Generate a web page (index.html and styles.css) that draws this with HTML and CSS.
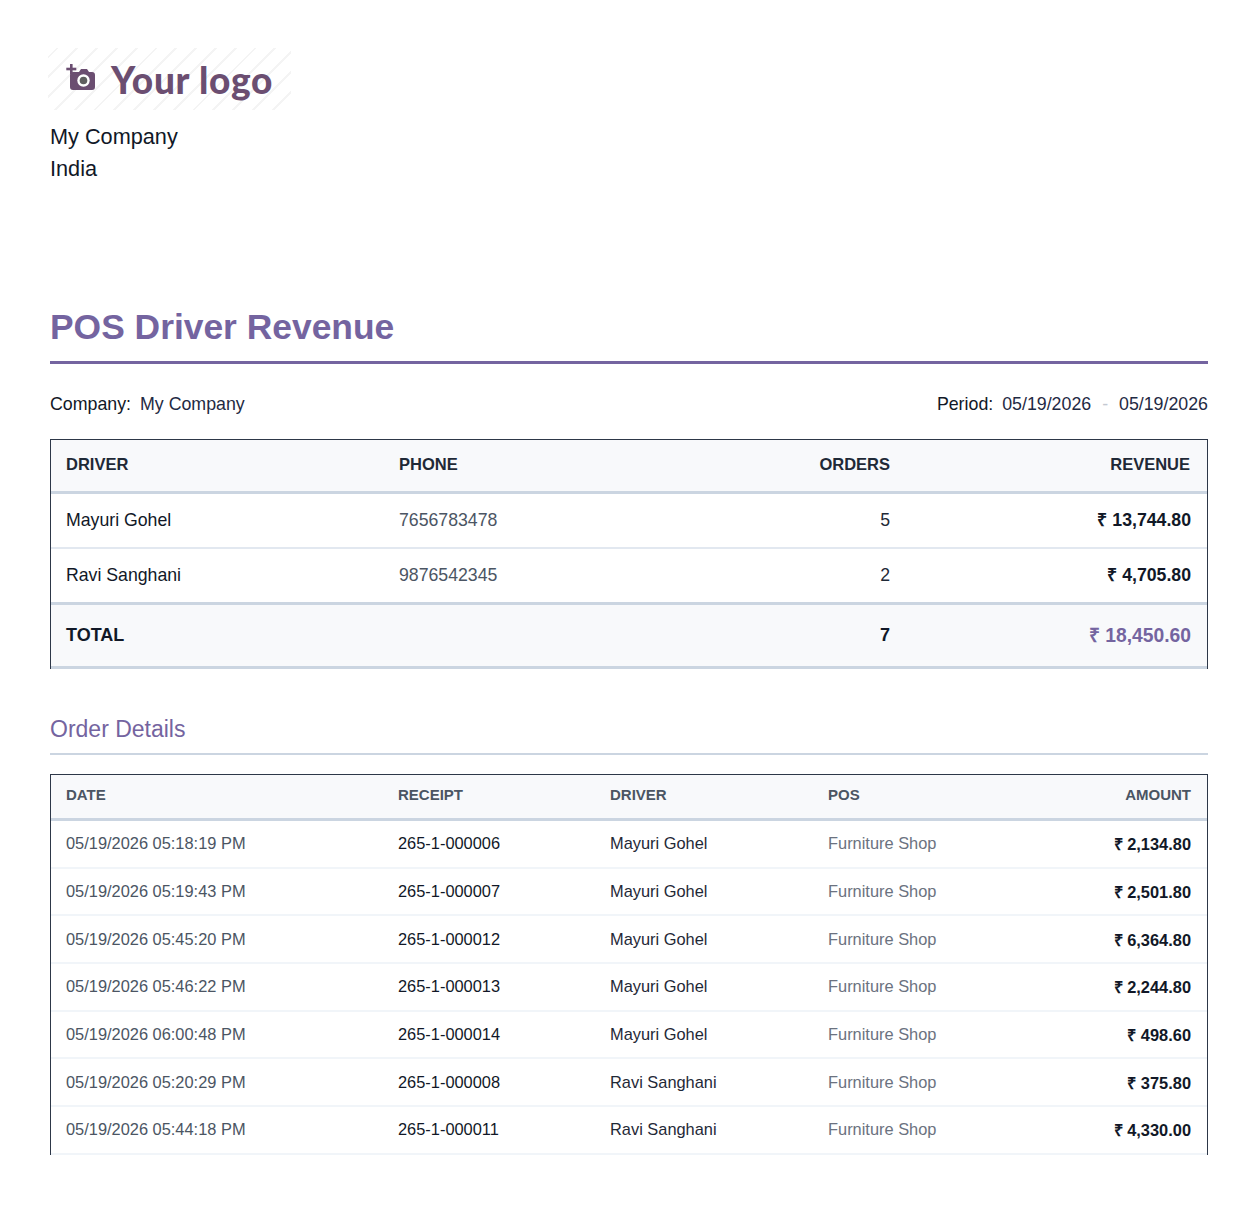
FILE: index.html
```html
<!DOCTYPE html>
<html>
<head>
<meta charset="utf-8">
<link rel="stylesheet" href="styles.css">
</head>
<body>
<div class="page">
  <header class="brand">
    <div class="logo">
      <svg class="cam" width="32" height="28" viewBox="0 0 32 28">
        <rect x="4" y="1" width="2.6" height="10" fill="#6b4e71"/>
        <rect x="0.3" y="4.7" width="10" height="2.6" fill="#6b4e71"/>
        <path d="M7 9 h6 l2 -3 h6 l2 3 h3 a3 3 0 0 1 3 3 v12 a3 3 0 0 1 -3 3 h-19 a3 3 0 0 1 -3 -3 v-12 a3 3 0 0 1 3 -3z" fill="#6b4e71"/>
        <circle cx="17.5" cy="17.5" r="6.2" fill="#fff"/>
        <circle cx="17.5" cy="17.5" r="3.8" fill="#5f5f5f"/>
      </svg>
      <span class="logo-text">Your logo</span>
    </div>
    <div class="addr">
      <div>My Company</div>
      <div>India</div>
    </div>
  </header>

  <h1 class="title">POS Driver Revenue</h1>

  <div class="meta">
    <div><span class="lbl">Company:</span> <span class="val">My Company</span></div>
    <div><span class="lbl">Period:</span> <span class="val">05/19/2026</span> <span class="dash">-</span> <span class="val">05/19/2026</span></div>
  </div>

  <table class="summary">
    <colgroup><col class="c1"><col class="c2"><col class="c3"><col class="c4"></colgroup>
    <thead>
      <tr><th>Driver</th><th>Phone</th><th class="r">Orders</th><th class="r">Revenue</th></tr>
    </thead>
    <tbody>
      <tr><td class="name">Mayuri Gohel</td><td class="phone">7656783478</td><td class="r num">5</td><td class="r money">₹ 13,744.80</td></tr>
      <tr><td class="name">Ravi Sanghani</td><td class="phone">9876542345</td><td class="r num">2</td><td class="r money">₹ 4,705.80</td></tr>
    </tbody>
    <tfoot>
      <tr><td class="tot">TOTAL</td><td></td><td class="r tot">7</td><td class="r grand">₹ 18,450.60</td></tr>
    </tfoot>
  </table>

  <h2 class="sub">Order Details</h2>

  <table class="orders">
    <colgroup><col class="d1"><col class="d2"><col class="d3"><col class="d4"><col class="d5"></colgroup>
    <thead>
      <tr><th>Date</th><th>Receipt</th><th>Driver</th><th>POS</th><th class="r">Amount</th></tr>
    </thead>
    <tbody>
      <tr><td class="date">05/19/2026 05:18:19 PM</td><td class="rec">265-1-000006</td><td class="drv">Mayuri Gohel</td><td class="pos">Furniture Shop</td><td class="r amt">₹ 2,134.80</td></tr>
      <tr><td class="date">05/19/2026 05:19:43 PM</td><td class="rec">265-1-000007</td><td class="drv">Mayuri Gohel</td><td class="pos">Furniture Shop</td><td class="r amt">₹ 2,501.80</td></tr>
      <tr><td class="date">05/19/2026 05:45:20 PM</td><td class="rec">265-1-000012</td><td class="drv">Mayuri Gohel</td><td class="pos">Furniture Shop</td><td class="r amt">₹ 6,364.80</td></tr>
      <tr><td class="date">05/19/2026 05:46:22 PM</td><td class="rec">265-1-000013</td><td class="drv">Mayuri Gohel</td><td class="pos">Furniture Shop</td><td class="r amt">₹ 2,244.80</td></tr>
      <tr><td class="date">05/19/2026 06:00:48 PM</td><td class="rec">265-1-000014</td><td class="drv">Mayuri Gohel</td><td class="pos">Furniture Shop</td><td class="r amt">₹ 498.60</td></tr>
      <tr><td class="date">05/19/2026 05:20:29 PM</td><td class="rec">265-1-000008</td><td class="drv">Ravi Sanghani</td><td class="pos">Furniture Shop</td><td class="r amt">₹ 375.80</td></tr>
      <tr><td class="date">05/19/2026 05:44:18 PM</td><td class="rec">265-1-000011</td><td class="drv">Ravi Sanghani</td><td class="pos">Furniture Shop</td><td class="r amt">₹ 4,330.00</td></tr>
    </tbody>
  </table>
</div>
</body>
</html>
```

FILE: styles.css
```css
html, body { margin: 0; padding: 0; background: #fff; }
body { font-family: "Liberation Sans", Arial, sans-serif; color: #1f2937; }
.page { padding: 48px 50px 60px 50px; }

.brand { display: flex; flex-direction: column; }
.logo {
  width: 243px; height: 62px; margin-left: -2px;
  display: flex; align-items: center; gap: 13px; padding-left: 18px; box-sizing: border-box;
  background: repeating-linear-gradient(-45deg, #fff 0 12px, #f4f4f4 12px 14px);
}
.cam { flex: none; margin-top: -4px; }
.logo-text { font-family: "Lato", sans-serif; font-weight: 900; font-size: 37px; color: #6b4e71; letter-spacing: 0.7px; white-space: nowrap; }
.addr { font-size: 21.7px; line-height: 32px; color: #111827; margin-top: 11px; }

.title { margin: 120px 0 0 0; font-size: 35.4px; line-height: 44px; font-weight: bold; color: #7464a0;
  padding-bottom: 12px; border-bottom: 3px solid #7464a0; }

.meta { display: flex; justify-content: space-between; margin-top: 28px; font-size: 17.8px; line-height: 24px; }
.meta .lbl { color: #111827; margin-right: 4px; }
.meta .val { color: #1f2a44; }
.meta .dash { color: #c4c9d2; margin: 0 6px; }

table { width: 100%; border-collapse: separate; border-spacing: 0; table-layout: fixed; }
th, td { padding: 0 16px 0 15px; text-align: left; }
.r { text-align: right; }

.summary { margin-top: 23px; border-top: 1px solid #2d3748; border-left: 1px solid #2d3748; border-right: 1px solid #2d3748; }
.summary .c1 { width: 333px; } .summary .c2 { width: 260px; } .summary .c3 { width: 263px; }
.summary th { height: 48px; padding-bottom: 3px; background: #f8f9fb; font-size: 16.5px; font-weight: bold; text-transform: uppercase; color: #1f2937; border-bottom: 3px solid #cbd5e1; }
.summary th.r { padding-right: 17px; }
.summary tbody td { height: 53px; font-size: 17.7px; border-bottom: 2px solid #e2e8f0; }
.summary tbody tr:last-child td { border-bottom: 3px solid #cbd5e1; }
.summary .name { color: #111827; }
.summary .phone { color: #4b5563; }
.summary .num { color: #1f2937; padding-right: 17px; }
.summary .money { font-weight: bold; color: #111827; padding-bottom: 3px; height: 50px; }
.summary tfoot td { height: 61px; background: #f8f9fb; font-size: 18px; border-bottom: 3px solid #cbd5e1; }
.summary tfoot td.tot.r { padding-right: 17px; }
.summary .tot { font-weight: bold; color: #111827; }
.summary .grand { font-weight: bold; color: #7464a0; font-size: 19.3px; padding-bottom: 3px; height: 58px; }

.sub { margin: 46px 0 0 0; font-size: 23px; line-height: 28px; font-weight: normal; color: #7464a0;
  padding-bottom: 10px; border-bottom: 2px solid #cbd5e1; }

.orders { margin-top: 19px; border-top: 1px solid #2d3748; border-left: 1px solid #2d3748; border-right: 1px solid #2d3748; }
.orders .d1 { width: 332px; } .orders .d2 { width: 212px; } .orders .d3 { width: 218px; } .orders .d4 { width: 200px; }
.orders th { height: 39px; padding-bottom: 4px; background: #f8f9fb; font-size: 15px; font-weight: bold; text-transform: uppercase; color: #4b5563; border-bottom: 3px solid #cbd5e1; }
.orders td { height: 45.7px; font-size: 16.4px; border-bottom: 2px solid #f1f5f9; }
.orders .date { color: #4b5563; }
.orders .rec { color: #111827; }
.orders .drv { color: #1f2937; }
.orders .pos { color: #6b7280; }
.orders .amt { font-weight: bold; color: #111827; }
```
